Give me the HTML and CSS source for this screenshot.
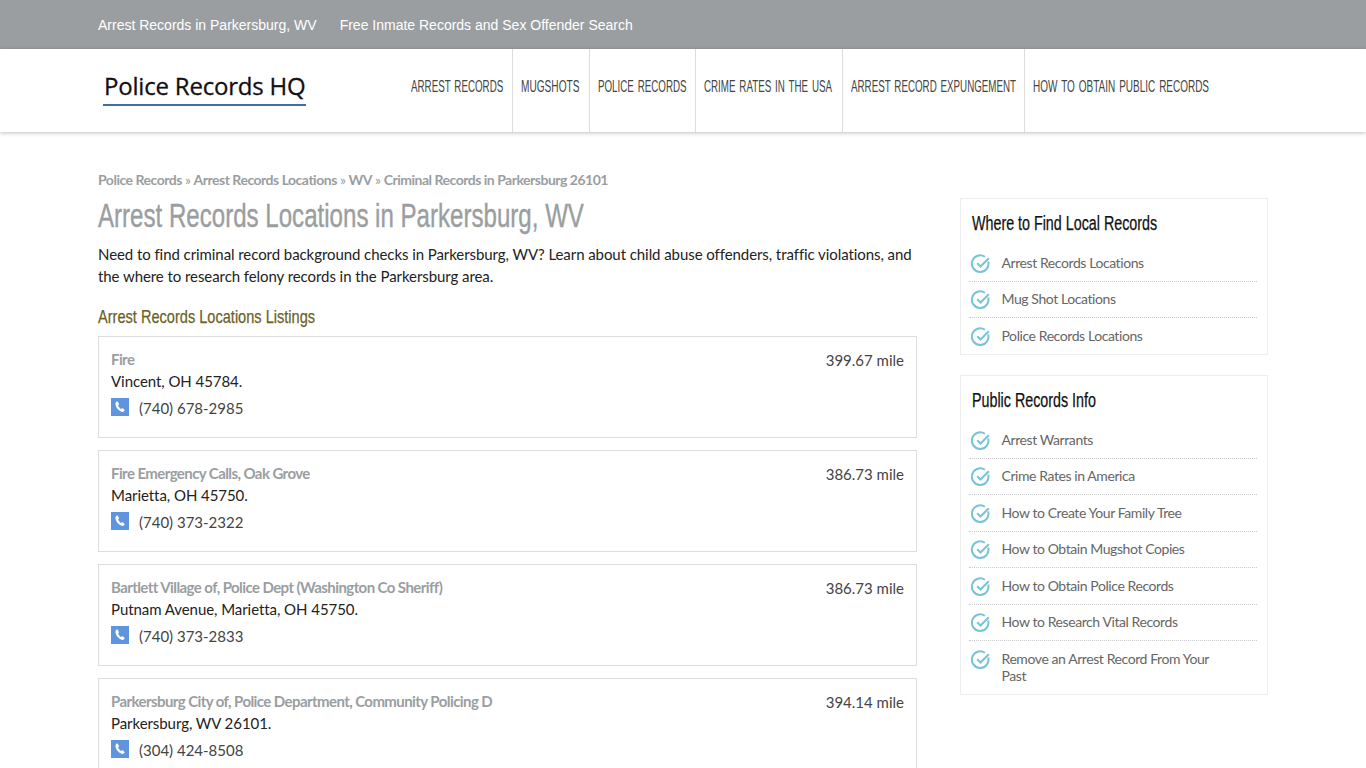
FILE: index.html
```html
<!DOCTYPE html>
<html lang="en">
<head>
    <meta charset="UTF-8">
    <meta name="viewport" content="width=device-width, initial-scale=1.0">
    <title>Arrest Records Locations in Parkersburg, WV</title>
    <link rel="stylesheet" href="styles.css">
</head>
<body>
    <!-- Top bar -->
    <div class="topbar">
        <div class="wrap topbar-inner">
            <a href="#">Arrest Records in Parkersburg, WV</a>
            <a href="#">Free Inmate Records and Sex Offender Search</a>
        </div>
    </div>

    <!-- Header -->
    <header class="header">
        <div class="wrap header-inner">
            <a href="#" class="logo">Police Records HQ</a>
            <nav class="nav">
                <a href="#"><span>Arrest Records</span></a>
                <a href="#"><span>Mugshots</span></a>
                <a href="#"><span>Police Records</span></a>
                <a href="#"><span>Crime Rates in the USA</span></a>
                <a href="#"><span>Arrest Record Expungement</span></a>
                <a href="#"><span>How to Obtain Public Records</span></a>
            </nav>
        </div>
    </header>

    <div class="wrap page">
        <main class="content">
            <div class="crumbs">
                <a href="#">Police Records</a> » <a href="#">Arrest Records Locations</a> » <a href="#">WV</a> » <a href="#">Criminal Records in Parkersburg 26101</a>
            </div>
            <h1>Arrest Records Locations in Parkersburg, WV</h1>
            <p class="intro">Need to find criminal record background checks in Parkersburg, WV? Learn about child abuse offenders, traffic violations, and the where to research felony records in the Parkersburg area.</p>
            <h2>Arrest Records Locations Listings</h2>

            <div class="card">
                <div class="card-info">
                    <a href="#" class="card-name">Fire</a>
                    <div class="card-addr">Vincent, OH 45784.</div>
                    <div class="card-phone">
                        <span class="phone-icon"><svg viewBox="0 0 18 18" width="18" height="18"><path d="M5.600 3.600c.5-.3 1-.2 1.300.3l1 1.800c.2.4.2.8-.1 1.100l-.7.8c.5 1.300 1.500 2.500 2.900 3.300l.9-.5c.4-.2.8-.2 1.100.1l1.400 1.300c.4.400.4.900 0 1.300-.8.800-1.800 1-2.900.6-3.200-1.200-5.300-3.700-6-6.900-.2-1.300.1-2.400 1.100-3.200z" fill="#fff"/></svg></span>
                        (740) 678-2985
                    </div>
                </div>
                <div class="card-dist">399.67 mile</div>
            </div>

            <div class="card">
                <div class="card-info">
                    <a href="#" class="card-name">Fire Emergency Calls, Oak Grove</a>
                    <div class="card-addr">Marietta, OH 45750.</div>
                    <div class="card-phone">
                        <span class="phone-icon"><svg viewBox="0 0 18 18" width="18" height="18"><path d="M5.600 3.600c.5-.3 1-.2 1.300.3l1 1.800c.2.4.2.8-.1 1.100l-.7.8c.5 1.300 1.500 2.500 2.900 3.300l.9-.5c.4-.2.8-.2 1.100.1l1.400 1.300c.4.400.4.900 0 1.300-.8.800-1.800 1-2.900.6-3.200-1.200-5.300-3.700-6-6.900-.2-1.300.1-2.400 1.100-3.200z" fill="#fff"/></svg></span>
                        (740) 373-2322
                    </div>
                </div>
                <div class="card-dist">386.73 mile</div>
            </div>

            <div class="card">
                <div class="card-info">
                    <a href="#" class="card-name">Bartlett Village of, Police Dept (Washington Co Sheriff)</a>
                    <div class="card-addr">Putnam Avenue, Marietta, OH 45750.</div>
                    <div class="card-phone">
                        <span class="phone-icon"><svg viewBox="0 0 18 18" width="18" height="18"><path d="M5.600 3.600c.5-.3 1-.2 1.300.3l1 1.800c.2.4.2.8-.1 1.100l-.7.8c.5 1.300 1.500 2.500 2.900 3.300l.9-.5c.4-.2.8-.2 1.100.1l1.400 1.300c.4.400.4.900 0 1.300-.8.800-1.800 1-2.900.6-3.200-1.200-5.300-3.700-6-6.900-.2-1.300.1-2.400 1.100-3.200z" fill="#fff"/></svg></span>
                        (740) 373-2833
                    </div>
                </div>
                <div class="card-dist">386.73 mile</div>
            </div>

            <div class="card">
                <div class="card-info">
                    <a href="#" class="card-name">Parkersburg City of, Police Department, Community Policing D</a>
                    <div class="card-addr">Parkersburg, WV 26101.</div>
                    <div class="card-phone">
                        <span class="phone-icon"><svg viewBox="0 0 18 18" width="18" height="18"><path d="M5.600 3.600c.5-.3 1-.2 1.300.3l1 1.800c.2.4.2.8-.1 1.100l-.7.8c.5 1.300 1.500 2.500 2.900 3.300l.9-.5c.4-.2.8-.2 1.100.1l1.400 1.300c.4.400.4.900 0 1.300-.8.800-1.800 1-2.900.6-3.200-1.200-5.300-3.700-6-6.900-.2-1.300.1-2.400 1.100-3.200z" fill="#fff"/></svg></span>
                        (304) 424-8508
                    </div>
                </div>
                <div class="card-dist">394.14 mile</div>
            </div>
        </main>

        <aside class="sidebar">
            <div class="box">
                <h3>Where to Find Local Records</h3>
                <ul>
                    <li><svg class="check" viewBox="0 0 20 20" width="20" height="20"><path d="M17.200 7.500a8.300 8.300 0 1 1-3.300-4.700M6.200 9.200l3.300 3.300 8.300-8.300"/></svg><a href="#">Arrest Records Locations</a></li>
                    <li><svg class="check" viewBox="0 0 20 20" width="20" height="20"><path d="M17.200 7.500a8.300 8.300 0 1 1-3.300-4.700M6.200 9.200l3.300 3.300 8.300-8.300"/></svg><a href="#">Mug Shot Locations</a></li>
                    <li><svg class="check" viewBox="0 0 20 20" width="20" height="20"><path d="M17.200 7.500a8.300 8.300 0 1 1-3.300-4.700M6.200 9.200l3.300 3.300 8.300-8.300"/></svg><a href="#">Police Records Locations</a></li>
                </ul>
            </div>
            <div class="box">
                <h3>Public Records Info</h3>
                <ul>
                    <li><svg class="check" viewBox="0 0 20 20" width="20" height="20"><path d="M17.200 7.500a8.300 8.300 0 1 1-3.300-4.700M6.200 9.200l3.300 3.300 8.300-8.300"/></svg><a href="#">Arrest Warrants</a></li>
                    <li><svg class="check" viewBox="0 0 20 20" width="20" height="20"><path d="M17.200 7.500a8.300 8.300 0 1 1-3.300-4.700M6.200 9.200l3.300 3.300 8.300-8.300"/></svg><a href="#">Crime Rates in America</a></li>
                    <li><svg class="check" viewBox="0 0 20 20" width="20" height="20"><path d="M17.200 7.500a8.300 8.300 0 1 1-3.300-4.700M6.200 9.200l3.300 3.300 8.300-8.300"/></svg><a href="#">How to Create Your Family Tree</a></li>
                    <li><svg class="check" viewBox="0 0 20 20" width="20" height="20"><path d="M17.200 7.500a8.300 8.300 0 1 1-3.300-4.700M6.200 9.200l3.300 3.300 8.300-8.300"/></svg><a href="#">How to Obtain Mugshot Copies</a></li>
                    <li><svg class="check" viewBox="0 0 20 20" width="20" height="20"><path d="M17.200 7.500a8.300 8.300 0 1 1-3.300-4.700M6.200 9.200l3.300 3.300 8.300-8.300"/></svg><a href="#">How to Obtain Police Records</a></li>
                    <li><svg class="check" viewBox="0 0 20 20" width="20" height="20"><path d="M17.200 7.500a8.300 8.300 0 1 1-3.300-4.700M6.200 9.200l3.300 3.300 8.300-8.300"/></svg><a href="#">How to Research Vital Records</a></li>
                    <li><svg class="check" viewBox="0 0 20 20" width="20" height="20"><path d="M17.200 7.500a8.300 8.300 0 1 1-3.300-4.700M6.200 9.200l3.300 3.300 8.300-8.300"/></svg><a href="#">Remove an Arrest Record From Your Past</a></li>
                </ul>
            </div>
        </aside>
    </div>
</body>
</html>
```

FILE: styles.css
```css
body {
    margin: 0;
    font-family: Lato, sans-serif;
    font-size: 15px;
    color: #222;
    background-color: #fff;
}
a {
    text-decoration: none;
    color: inherit;
}
.wrap {
    width: 1170px;
    margin: 0 auto;
}
.topbar {
    height: 49px;
    background-color: #9a9ea1;
}
.topbar-inner {
    display: flex;
    gap: 23px;
    line-height: 50px;
    font-family: "Liberation Sans", Arial, sans-serif;
    font-size: 14px;
    color: #fff;
}
.header {
    height: 83px;
    background-color: #fff;
    box-shadow: 0 1px 4px rgba(0, 0, 0, 0.25);
}
.header-inner {
    display: flex;
    height: 83px;
}
.logo {
    align-self: flex-start;
    width: 203px;
    margin: 20px 0 0 5px;
    padding-bottom: 2px;
    border-bottom: 2px solid #3f6ea3;
    font-family: "Open Sans", sans-serif;
    font-size: 24px;
    font-weight: 500;
    line-height: 33px;
    letter-spacing: -0.2px;
    text-indent: 1px;
    color: #111;
    white-space: nowrap;
    -webkit-text-stroke: 0.3px #111;
}
.nav {
    display: flex;
    margin-left: 97px;
}
.nav a {
    box-sizing: border-box;
    padding: 0 8px;
    border-right: 1px solid #ddd;
}
.nav a:nth-child(1) { width: 110px; }
.nav a:nth-child(2) { width: 77px; }
.nav a:nth-child(3) { width: 106px; }
.nav a:nth-child(4) { width: 147px; }
.nav a:nth-child(5) { width: 182px; }
.nav a:nth-child(6) { width: 193px; border-right: none; }
/* no condensed font here, so the headings are squeezed */
.nav span {
    display: block;
    font-family: "Liberation Sans", sans-serif;
    font-size: 17px;
    line-height: 75px;
    word-spacing: 2px;
    text-transform: uppercase;
    color: #444;
    white-space: nowrap;
    transform: scaleX(0.575);
    transform-origin: left;
}
.nav a:nth-child(2) span { transform: scaleX(0.595); }
.nav a:nth-child(6) span { transform: scaleX(0.587); }
.page {
    display: flex;
    justify-content: space-between;
    align-items: flex-start;
    padding-top: 38px;
}
.content {
    width: 819px;
}
.crumbs {
    font-size: 14px;
    line-height: 20px;
    letter-spacing: -0.49px;
    color: #9a9ea1;
}
.crumbs a {
    font-weight: bold;
}
h1 {
    margin: 6px 0 0;
    font-family: "Liberation Sans", sans-serif;
    font-size: 33.5px;
    font-weight: normal;
    line-height: 40px;
    color: #9a9ea1;
    white-space: nowrap;
    transform: scaleX(0.719);
    transform-origin: left;
    -webkit-text-stroke: 0.4px #9a9ea1;
}
.intro {
    margin: 7px 0 0;
    line-height: 22px;
    letter-spacing: -0.07px;
}
h2 {
    margin: 16px 0 0;
    font-family: "Liberation Sans", sans-serif;
    font-size: 19px;
    font-weight: normal;
    line-height: 28px;
    color: #6b6127;
    white-space: nowrap;
    transform: scaleX(0.767);
    transform-origin: left;
    -webkit-text-stroke: 0.25px #6b6127;
}
.card {
    display: flex;
    justify-content: space-between;
    box-sizing: border-box;
    height: 102px;
    margin-top: 12px;
    padding: 11px 12px;
    border: 1px solid #ddd;
}
h2 + .card {
    margin-top: 5px;
}
.card-name {
    display: block;
    font-weight: bold;
    line-height: 22px;
    letter-spacing: -0.58px;
    color: #9a9ea1;
}
.card-addr {
    line-height: 22px;
    letter-spacing: -0.06px;
}
.card-phone {
    display: flex;
    align-items: center;
    gap: 10px;
    margin-top: 5px;
    line-height: 22px;
    color: #444;
}
.phone-icon {
    display: block;
    width: 18px;
    height: 18px;
    margin-top: -2px;
    background-color: #5f95de;
}
.phone-icon svg {
    display: block;
}
.card-dist {
    margin-top: 1px;
    line-height: 22px;
    color: #444;
}
.sidebar {
    width: 308px;
    margin-top: 28px;
}
.box {
    box-sizing: border-box;
    margin-bottom: 20px;
    padding: 6px 10px 0 8px;
    border: 1px solid #eee;
}
.box h3 {
    margin: 0 0 4.25px 3px;
    font-family: "Liberation Sans", sans-serif;
    font-size: 19.5px;
    font-weight: normal;
    line-height: 36px;
    color: #111;
    white-space: nowrap;
    transform: scaleX(0.733);
    transform-origin: left;
    -webkit-text-stroke: 0.25px #111;
}
.box ul {
    margin: 0;
    padding: 0;
    list-style: none;
}
.box li {
    display: flex;
    align-items: flex-start;
    gap: 10.5px;
    padding: 8.5px 40px 10px 2px;
    border-bottom: 1px dotted #ccc;
    font-size: 14px;
    line-height: 17px;
    letter-spacing: -0.42px;
    color: #666;
}
.box li:last-child {
    border-bottom: none;
}
.check {
    flex-shrink: 0;
    margin-bottom: -3px;
}
.check path {
    fill: none;
    stroke: #78c2da;
    stroke-width: 2;
}
```
